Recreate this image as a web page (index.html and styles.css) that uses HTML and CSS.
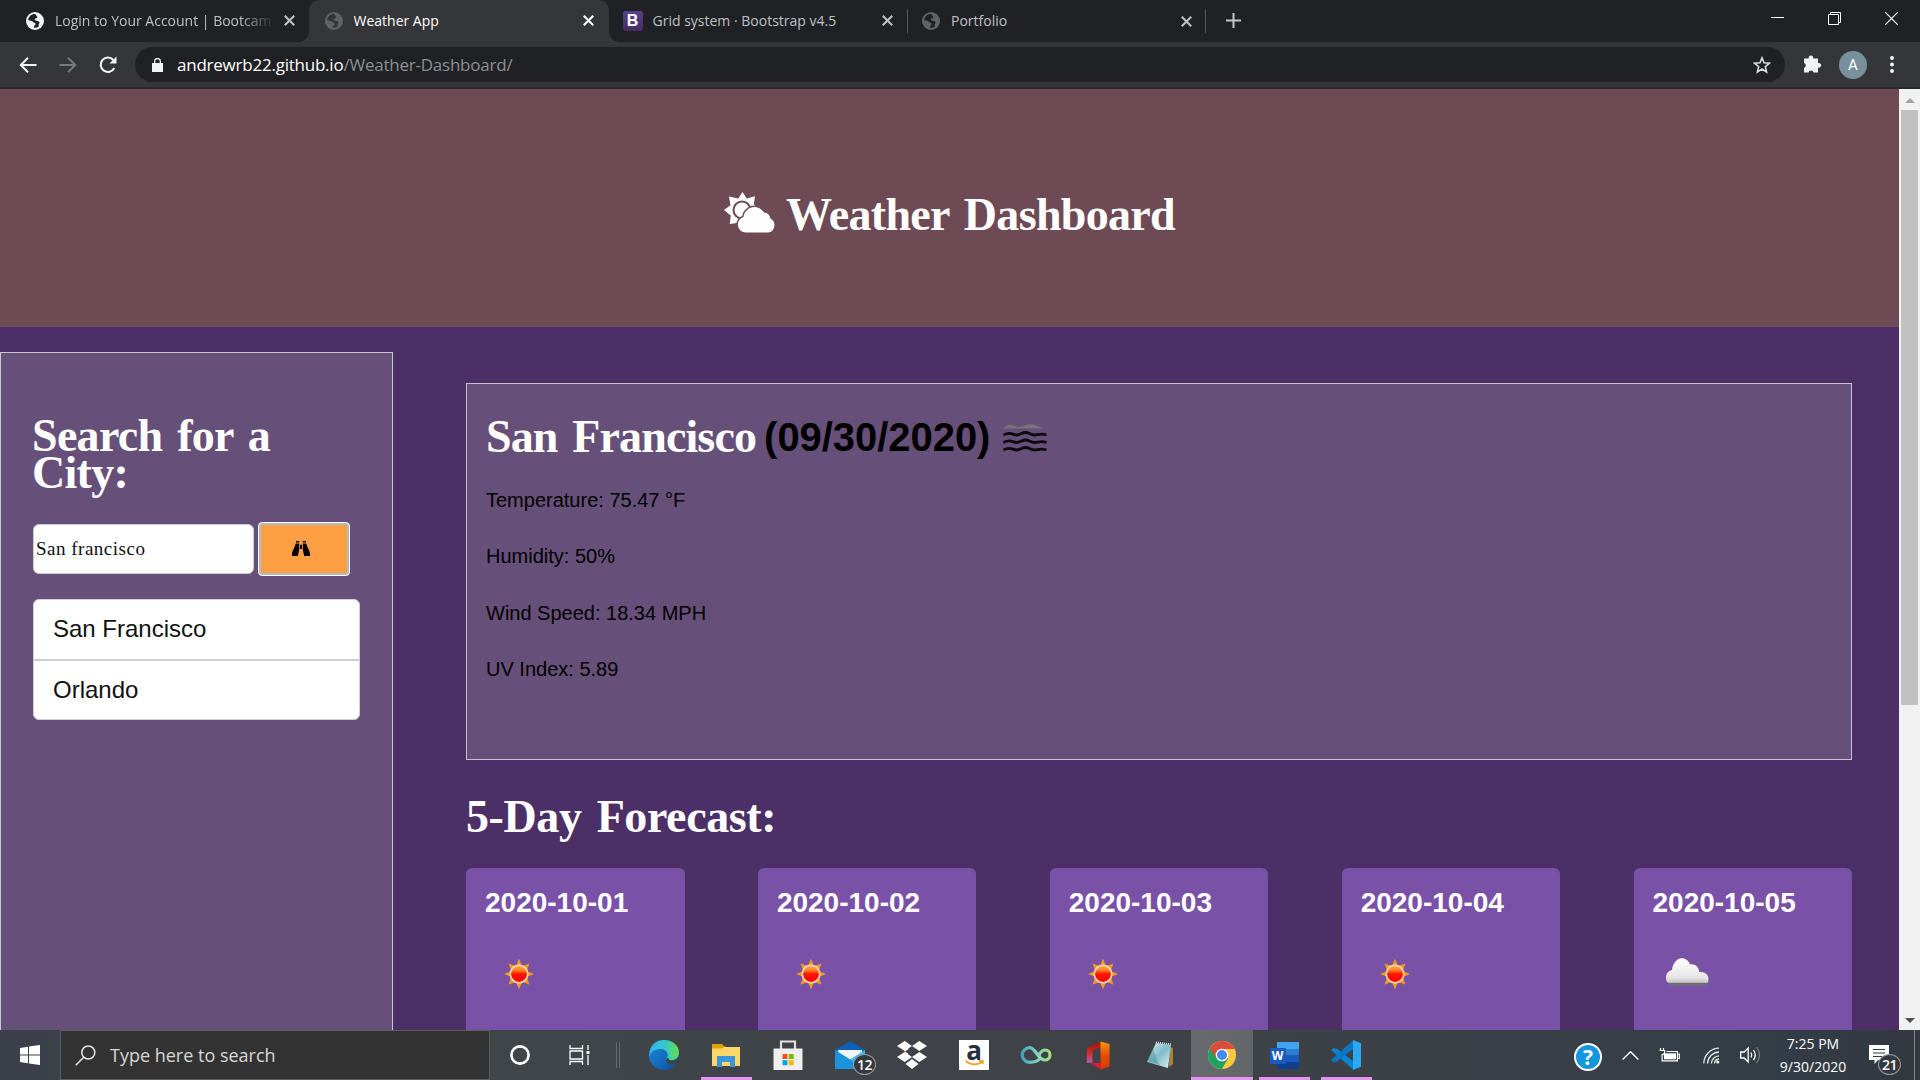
FILE: index.html
```
<!DOCTYPE html>
<html lang="en">
<head>
<meta charset="utf-8">
<title>Weather App</title>
<link rel="stylesheet" href="styles.css">
</head>
<body>
<svg class="defs" width="0" height="0" aria-hidden="true">
  <defs>
    <linearGradient id="sunFill" x1="0" y1="0" x2="0" y2="1"><stop offset="0" stop-color="#ffb35c"/><stop offset=".3" stop-color="#ff7a20"/><stop offset=".5" stop-color="#ff1500"/><stop offset="1" stop-color="#ff0000"/></linearGradient>
    <linearGradient id="cloudFill" x1="0" y1="0" x2="0" y2="1"><stop offset="0" stop-color="#ffffff"/><stop offset=".7" stop-color="#e6e6e6"/><stop offset=".88" stop-color="#c8c8c8"/><stop offset=".93" stop-color="#666"/><stop offset="1" stop-color="#777"/></linearGradient>
    <linearGradient id="edgeTop" x1="0" y1="0" x2="1" y2="0"><stop offset="0" stop-color="#2fb5f0"/><stop offset=".55" stop-color="#35c8c8"/><stop offset="1" stop-color="#6adf4a"/></linearGradient>
    <linearGradient id="edgeLow" x1="0" y1="0" x2="1" y2="1"><stop offset="0" stop-color="#1b8de0"/><stop offset="1" stop-color="#0b4f9e"/></linearGradient>
    <linearGradient id="infinity" x1="0" y1="0" x2="1" y2="0"><stop offset="0" stop-color="#43a3bd"/><stop offset=".5" stop-color="#7fd0c8"/><stop offset="1" stop-color="#a5e07f"/></linearGradient>
    <linearGradient id="office" x1="0" y1="0" x2="0" y2="1"><stop offset="0" stop-color="#9e1208"/><stop offset=".45" stop-color="#d0281a"/><stop offset="1" stop-color="#b55bb0"/></linearGradient>
    <linearGradient id="officeR" x1="0" y1="0" x2="0" y2="1"><stop offset="0" stop-color="#ff9a00"/><stop offset=".5" stop-color="#e64a00"/><stop offset="1" stop-color="#d83b01"/></linearGradient>
    <linearGradient id="pad" x1="0" y1="0" x2="1" y2="1"><stop offset="0" stop-color="#d9f1f5"/><stop offset=".5" stop-color="#7fbccb"/><stop offset="1" stop-color="#e2f2f5"/></linearGradient>
    <symbol id="globe" viewBox="0 0 18 18"><circle cx="9" cy="9" r="9"/><path class="land" d="M9.5 2.2C6 1.6 2.4 4.4 2.2 8.300c2 .4 3.600.2 4.700 1.500 1 1.300 2.600.7 2.700 2.300 0 1.300-1.900 1.500-1.800 3.500 1.500.4 3.500.1 5-1l-.2-2.400c1-.6 1.200-1.700.4-2.600-1-1.100-2.400-.6-3.500-1.200C8.200 7.800 8.700 6.600 10.200 6.300c1-.2 1.300-.9.900-1.800-.4-.7-1.200-1.200-1.600-2.300z"/></symbol>
    <symbol id="close" viewBox="0 0 10 10"><path d="M.7.7l8.600 8.600M9.300.7L.7 9.300" fill="none" stroke="currentColor" stroke-width="1.900"/></symbol>
    <symbol id="sun" viewBox="0 0 70 70">
      <path d="M35 19.500l3 7.500 7.500-2.500-2.800 7.500 7.300 3-7.300 3 2.800 7.500-7.500-2.500-3 7.500-3-7.500-7.500 2.500 2.800-7.500-7.300-3 7.300-3-2.800-7.500 7.500 2.500z" fill="#f59a1b"/>
      <circle cx="35" cy="35" r="8.700" fill="url(#sunFill)" stroke="#ffe0b8" stroke-width="1.500"/>
    </symbol>
  </defs>
</svg>

<div class="tabstrip">
  <div class="tab">
    <svg class="favicon globe bright"><use href="#globe"/></svg>
    <span class="tab-title faded">Login to Your Account | Bootcam</span>
    <svg class="tab-close"><use href="#close"/></svg>
  </div>
  <div class="tab active">
    <svg class="favicon globe dim on-active"><use href="#globe"/></svg>
    <span class="tab-title">Weather App</span>
    <svg class="tab-close"><use href="#close"/></svg>
  </div>
  <div class="tab">
    <span class="favicon bootstrap">B</span>
    <span class="tab-title">Grid system · Bootstrap v4.5</span>
    <svg class="tab-close"><use href="#close"/></svg>
  </div>
  <div class="tab divided">
    <svg class="favicon globe dim"><use href="#globe"/></svg>
    <span class="tab-title">Portfolio</span>
    <svg class="tab-close"><use href="#close"/></svg>
  </div>
  <div class="new-tab"><svg width="15" height="15" viewBox="0 0 15 15"><path d="M7.500 0v15M0 7.500h15" stroke="#c4c7ca" stroke-width="2"/></svg></div>
  <div class="window-controls">
    <svg width="13" height="13" viewBox="0 0 13 13"><path d="M0 5.500h13" stroke="#fff"/></svg>
    <svg width="13" height="13" viewBox="0 0 13 13" fill="none" stroke="#fff"><path d="M.5 2.500h10v10H.5zM2.500 2.500v-2h10v10h-2"/></svg>
    <svg width="13" height="13" viewBox="0 0 13 13" stroke="#fff" stroke-width="1.200"><path d="M.3.3l12.400 12.400M12.700.3L.3 12.700"/></svg>
  </div>
</div>

<div class="toolbar">
  <svg class="nav" width="18" height="16" viewBox="0 0 18 16" fill="none" stroke="#f1f3f4" stroke-width="2"><path d="M17.500 8H2M9 .8L1.800 8 9 15.200"/></svg>
  <svg class="nav" width="18" height="16" viewBox="0 0 18 16" fill="none" stroke="#77797d" stroke-width="2"><path d="M.5 8H16M9 .8L16.200 8 9 15.200"/></svg>
  <svg class="nav" width="18" height="18" viewBox="0 0 18 18" fill="none" stroke="#f1f3f4" stroke-width="2.100"><path d="M15.300 12A7.200 7.200 0 1 1 14.300 4"/><path d="M17.500.5v7h-7z" fill="#f1f3f4" stroke="none"/></svg>
  <div class="omnibox">
    <svg width="11" height="14" viewBox="0 0 11 14"><path d="M0 5h11v9H0z" fill="#f1f3f4"/><path d="M2.700 6V3.300a2.800 2.800 0 0 1 5.600 0V6" fill="none" stroke="#f1f3f4" stroke-width="1.300"/></svg>
    <span class="url"><b>andrewrb22.github.io</b>/Weather-Dashboard/</span>
    <svg class="star" width="18" height="18" viewBox="0 0 18 18" fill="none" stroke="#dadce0" stroke-width="1.600"><path d="M9 1.800l2 5 5.400.4-4.100 3.500 1.300 5.200L9 13l-4.600 2.900 1.300-5.200L1.600 7.200 7 6.800z"/></svg>
  </div>
  <svg class="puzzle" width="19" height="19" viewBox="0 0 19 19" fill="#f1f3f4"><path d="M1 4.500h4.800a2.300 2.300 0 1 1 4.300 0H15v4.600a2.400 2.400 0 1 1 0 4.500V18.500h-4.500a2.500 2.500 0 0 0-4.900 0H1v-4.600a2.500 2.500 0 0 0 0-4.800z"/></svg>
  <span class="avatar">A</span>
  <svg class="dots" width="4" height="17" viewBox="0 0 4 17" fill="#f1f3f4"><circle cx="2" cy="2" r="2"/><circle cx="2" cy="8.500" r="2"/><circle cx="2" cy="15" r="2"/></svg>
</div>

<div class="viewport">
  <div class="page">
    <header class="banner">
      <svg class="banner-icon" width="52" height="41" viewBox="0 0 52 41">
        <path d="M18.500 0l4.300 6.600 8.200-2.400-1.200 8 6.500 5.500-8 6-12 6.800-10.500 1.500 1-8.500L0 18l6.500-4.700L5 4.600l9.200 2z" fill="#fff"/>
        <circle cx="18" cy="18" r="8.500" fill="#fff" stroke="#6e4a55" stroke-width="2"/>
        <path d="M21 40.500a8 8 0 0 1-1.500-15.600A11 11 0 0 1 40 20.500a7.400 7.400 0 0 1 6.500 6A7.500 7.500 0 0 1 44 40.500z" fill="#fff" stroke="#6e4a55" stroke-width="3" paint-order="stroke"/>
      </svg>
      <h1>Weather Dashboard</h1>
    </header>
    <div class="columns">
      <aside class="sidebar">
        <h2>Search for a<br>City:</h2>
        <div class="search-row">
          <input class="search-input" type="text" value="San francisco">
          <button class="search-btn">
            <svg width="18" height="15" viewBox="0 0 18 15"><path d="M4 0h3.200v1.500H4zM10.800 0H14v1.500h-3.200zM3.700 2.500h3.500V9L5.800 15H0v-2.500C.3 9 3.300 6 3.700 2.500zM14.300 2.500h-3.500V9l1.400 6H18v-2.500c-.3-3.500-3.300-6.500-3.700-10zM8 3.700h2V8H8z"/></svg>
          </button>
        </div>
        <ul class="history"><li>San Francisco</li><li>Orlando</li></ul>
      </aside>
      <main class="main">
        <section class="current">
          <div class="current-title">
            <h2>San Francisco</h2>
            <h3>(09/30/2020)</h3>
            <svg class="mist" width="44" height="28" viewBox="0 0 44 28" fill="none" stroke-width="2.800" stroke="#0b090d"><path d="M0 4.500q5.500-5.500 11-3t11 0 11 0T44 4.500z" fill="#77737b" stroke="none"/><path d="M.5 11c7-4 9 0 13 0s5-2.500 9-2.500 5 2.500 9 2.500 6-2 12 0M.5 18.500c7-4 9 0 13 0s5-2.500 9-2.500 5 2.500 9 2.500 6-2 12 0M.5 26c7-4 9 0 13 0s5-2.500 9-2.500 5 2.500 9 2.500 6-2 12 0"/></svg>
          </div>
          <div class="stats"><p>Temperature: 75.47 °F</p><p>Humidity: 50%</p><p>Wind Speed: 18.34 MPH</p><p>UV Index: 5.89</p></div>
        </section>
        <h2 class="forecast-title">5-Day Forecast:</h2>
        <div class="forecast">
          <article class="day"><h4>2020-10-01</h4><svg class="sky"><use href="#sun"/></svg></article>
          <article class="day"><h4>2020-10-02</h4><svg class="sky"><use href="#sun"/></svg></article>
          <article class="day"><h4>2020-10-03</h4><svg class="sky"><use href="#sun"/></svg></article>
          <article class="day"><h4>2020-10-04</h4><svg class="sky"><use href="#sun"/></svg></article>
          <article class="day"><h4>2020-10-05</h4><svg class="sky" viewBox="-1 1 70 70"><path d="M20.500 47.500c-5-.3-8-4-7.500-8.500.3-4 3-6.500 6-7 .5-6 4.500-11.500 9.500-11.700 4-.1 7 2.200 8.500 6.200 5-1 8.700 2.300 9.300 7.500 5-.8 9.500 2.500 9.200 7.500-.1 3.500-2 5.800-5 6z" fill="url(#cloudFill)"/></svg></article>
        </div>
      </main>
    </div>
  </div>
  <div class="scrollbar">
    <svg width="10" height="5" viewBox="0 0 10 5"><path d="M0 5l5-5 5 5z" fill="#a3a3a3"/></svg>
    <span class="thumb"></span>
    <svg class="down" width="10" height="5" viewBox="0 0 10 5"><path d="M0 0l5 5 5-5z" fill="#505050"/></svg>
  </div>
</div>

<div class="taskbar">
  <div class="start"><svg width="20" height="20" viewBox="0 0 20 20" fill="#fff"><path d="M0 3l8-1.200v7.700H0zM9 1.600L20 0v9.500H9zM0 10.500h8v7.700L0 17zM9 10.500h11V20L9 18.400z"/></svg></div>
  <div class="search-box">
    <svg width="21" height="21" viewBox="0 0 21 21" fill="none" stroke="#e8e8e8" stroke-width="1.500"><circle cx="13.300" cy="7.500" r="6.500"/><path d="M8.700 12.200L.7 20.200"/></svg>
    <span>Type here to search</span>
  </div>
  <div class="cell first"><svg width="22" height="22" viewBox="0 0 22 22"><circle cx="11" cy="11" r="8.600" fill="none" stroke="#fff" stroke-width="2.600"/></svg></div>
  <div class="cell narrow"><svg width="22" height="20" viewBox="0 0 22 20" fill="none" stroke="#fff" stroke-width="1.300"><path d="M1 0v3.500h12.500V0M1 6h12.500v8H1zM1 20v-3.500h12.500V20M19 0v5M19 10v10"/><path d="M17.500 6h3v3h-3z" fill="#fff" stroke="none"/></svg></div>
  <div class="grip"></div>

  <div class="cell"><svg width="30" height="30" viewBox="0 0 30 30"><circle cx="15" cy="15" r="15" fill="url(#edgeLow)"/><path d="M.5 12C2 4 8 0 15 0c9 0 15 6 15 12.500 0 5-4 8-8.500 8-3 0-5-1.300-3.500-3 2-3 0-8.500-6-8.500C6 9 2 11 0 17z" fill="url(#edgeTop)"/><path d="M20 17.500c-1 1.300 0 3 3.500 3 3 0 5-1.500 6-3.500l.5 5-3 2-4 .8c-4-.3-7-3-5-6.300z" fill="#3f4347"/></svg></div>
  <div class="cell open"><svg width="30" height="24" viewBox="0 0 30 24"><path d="M1 1h10l2.500 2.500H15V8H1z" fill="#e0a000"/><path d="M1 5.500h10L13 4h16v19H1z" fill="#ffd667"/><path d="M6 13h18v11h-5v-5h-8v5H6z" fill="#3d95db"/></svg></div>
  <div class="cell"><svg width="30" height="30" viewBox="0 0 30 30"><path d="M8 9V1.500h14V9" fill="none" stroke="#e2e2e2" stroke-width="2.200"/><path d="M.5 8.500h29V30H.5z" fill="#efefef"/><path d="M9.500 14h5v5h-5z" fill="#f25022"/><path d="M15.700 14h5v5h-5z" fill="#7fba00"/><path d="M9.500 20.200h5v5h-5z" fill="#00a4ef"/><path d="M15.700 20.200h5v5h-5z" fill="#ffb900"/></svg></div>
  <div class="cell mail"><svg width="30" height="28" viewBox="0 0 30 28"><path d="M0 9L15 0l15 9v9H0z" fill="#0f5fb5"/><path d="M3 9h24v9H3z" fill="#f3f3f3"/><path d="M0 9l15 9.500L30 9v19H0z" fill="#35bdf2"/><path d="M0 9l30 19H0z" fill="#1c93df"/></svg><span class="badge">12</span></div>
  <div class="cell"><svg width="30" height="28" viewBox="0 0 30 28" fill="#fff"><path d="M7.700 0L15 5l-7.300 5L0 5zM22.300 0L30 5l-7.700 5L15 5zM7.700 11L15 16l-7.300 5L0 16zM22.300 11L30 16l-7.700 5-7.300-5zM7.700 5l7.300 5.300-7.300 5zM15 18l6.500 5-6.500 5-6.500-5z"/><path d="M15 5.800l7 4.700-7 4.700-7-4.700z" fill="#3f4347"/></svg></div>
  <div class="cell"><span class="amazon">a<svg width="19" height="6" viewBox="0 0 19 6" fill="none" stroke="#f79b1e" stroke-width="1.700"><path d="M.5.8q8 6.500 16.500 1.200M14 .9h3.700v3"/></svg></span></div>
  <div class="cell"><svg width="32" height="18" viewBox="0 0 32 18" fill="none" stroke="url(#infinity)" stroke-width="3.200"><path d="M20 12.500C17 16 14 16.300 9.500 16.300a7.300 7.300 0 1 1 0-14.600C16 1.700 17.500 14 25 14a4.900 4.900 0 1 0 0-10c-2.500 0-4 1.500-6 4.500z"/></svg></div>
  <div class="cell"><svg width="24" height="29" viewBox="0 0 24 29"><path d="M.8 7L14.500.5v6L6.500 9v12.500L.8 22z" fill="url(#office)"/><path d="M14.500.5L23.500 3v22.500l-9 3z" fill="url(#officeR)"/><path d="M4.500 22h10v6.500z" fill="#e2183a"/></svg></div>
  <div class="cell"><svg width="28" height="28" viewBox="0 0 28 28"><path d="M24 6l3 1v16l-4 3z" fill="#a98436"/><path d="M10 2l15 2-3 23-21-6z" fill="url(#pad)"/><path d="M1 20l6-13 4 12 3 5z" fill="#3f8296" opacity=".4"/><path d="M10 1.500l15 1.800" stroke="#dbe4e6" stroke-width="2" stroke-dasharray="1 1"/></svg></div>
  <div class="cell open current-app"><svg width="28" height="28" viewBox="0 0 28 28"><circle cx="14" cy="14" r="14" fill="#fdc93c"/><path d="M14 14L1.900 7A14 14 0 0 0 14 28l6-10.500z" fill="#1ea25f"/><path d="M1.900 7A14 14 0 0 1 26.100 7L27 8H14l-6 9z" fill="#dd4a3e"/><circle cx="14" cy="14" r="6.300" fill="#fff"/><circle cx="14" cy="14" r="5" fill="#4688f1"/></svg></div>
  <div class="cell open"><span class="word"><i>W</i></span></div>
  <div class="cell open"><svg width="30" height="30" viewBox="0 0 30 30"><path d="M0 10l2.500-2 4 1L22 21v8.500z" fill="#0a84d3"/><path d="M0 20l2.500 2.500 3.500-1L22 9V.5z" fill="#0877c4"/><path d="M22 0l8 3.300v23.400L22 30z" fill="#2aa9f2"/></svg></div>

  <div class="tray">
    <span class="help">?</span>
    <svg class="chev" width="17" height="9" viewBox="0 0 17 9" fill="none" stroke="#fff" stroke-width="1.400"><path d="M.6 8.400l7.900-7.700 7.900 7.700"/></svg>
    <svg class="batt" width="21" height="14" viewBox="0 0 21 14" fill="none" stroke="#fff" stroke-width="1.200"><path d="M1.500 0v2.500M4.500 0v2.500M.6 2.500h5v2q0 2-2.500 2.200v6.200h15.300V3.500H7.500M19 6h1.300v4.500H19"/><path d="M5 5.300h12v6H5z" fill="#fff" stroke="none"/></svg>
    <svg class="wifi" width="17" height="17" viewBox="0 0 17 17" fill="none" stroke="#e8e8e8" stroke-width="1.300"><path d="M.8 16.500A15.500 15.500 0 0 1 16 1.200M4.500 16.500A12 12 0 0 1 16 5M8.300 16.500A8 8 0 0 1 16 8.900M11.500 16.500A5 5 0 0 1 16 12"/><circle cx="14.800" cy="15" r="1.500" fill="#fff" stroke="none"/></svg>
    <svg class="vol" width="21" height="18" viewBox="0 0 21 18" fill="none" stroke="#fff" stroke-width="1.300"><path d="M.7 6h3.500l4-4v14l-4-4H.7z"/><path d="M11 6.500q1.500 2.500 0 5M13.500 4q3.500 5 0 10"/><path d="M16.500 1.200q6 7.800 0 15.600" stroke="#777b80"/></svg>
    <div class="clock"><span>7:25 PM</span><span class="date">9/30/2020</span></div>
    <div class="notes"><svg width="20" height="20" viewBox="0 0 20 20"><path d="M0 0h20v15H9l-3.500 4v-4H0z" fill="#fff"/><path d="M4 4.500h12M4 8h12M4 11.500h12" stroke="#33383e" stroke-width="1.200"/></svg><span class="badge">21</span></div>
    <div class="peek"></div>
  </div>
</div>
</body>
</html>
```
FILE: styles.css
```
* { box-sizing: border-box; }
html, body { margin: 0; height: 100%; }
body { display: flex; flex-direction: column; width: 1920px; height: 1080px; overflow: hidden; font-family: "Liberation Sans", Arial, sans-serif; background: #4c2f66; }
h1, h2, h3, h4, p, ul { margin: 0; padding: 0; }
svg { display: block; flex: none; }
.defs { position: absolute; }

/* browser tabs */
.tabstrip { display: flex; flex: none; height: 42px; padding-left: 10px; background: #202124; font: 14px/20px "Open Sans", sans-serif; color: #bdc1c6; }
.tab { display: flex; align-items: center; width: 298.500px; padding: 0 13px 1px 16px; flex: none; }
.tab.active { position: relative; width: 300px; padding-right: 14px; background: #35363a; border-radius: 10px 10px 0 0; color: #fff; }
.tab.active::before, .tab.active::after { content: ""; position: absolute; bottom: 0; width: 10px; height: 10px; }
.tab.active::before { left: -10px; background: radial-gradient(circle at 0 0, transparent 9.500px, #35363a 10px); }
.tab.active::after { right: -10px; background: radial-gradient(circle at 100% 0, transparent 9.500px, #35363a 10px); }
.tab.divided { border-left: 1px solid #55575b; border-right: 1px solid #55575b; background: #202124; height: 24px; margin-top: 9px; padding: 0 12px 0 14px; align-self: flex-start; }
.favicon { width: 18px; height: 18px; margin-right: 11px; flex: none; }
.globe.bright { fill: #f1f3f4; color: #202124; }
.globe.dim { fill: #5f6368; color: #202124; }
.globe.on-active { color: #35363a; }
.land { fill: currentColor; }
.favicon.bootstrap { width: 20px; height: 20px; margin: 0 10px 0 -2px; border-radius: 3px; background: linear-gradient(#59408a, #452c66); color: #fff; font: bold 16px/20px "Liberation Sans", sans-serif; text-align: center; }
.tab-title { flex: 1; white-space: nowrap; overflow: hidden; }
.faded { -webkit-mask-image: linear-gradient(90deg, #000 185px, transparent 220px); mask-image: linear-gradient(90deg, #000 185px, transparent 220px); }
.tab-close { width: 11px; height: 11px; margin-right: 1px; }
.new-tab { padding: 13px 0 0 20px; }
.window-controls { display: flex; gap: 44px; margin: 12px 22px 0 auto; }

/* address bar */
.toolbar { display: flex; align-items: center; flex: none; height: 47px; padding: 0 0 0 19px; background: #35363a; border-bottom: 2px solid #28292c; }
.nav { margin-right: 22px; }
.nav:nth-child(3) { margin-right: 18px; }
.omnibox { display: flex; align-items: center; width: 1650px; height: 35px; padding: 0 14px 0 17px; border-radius: 18px; background: #202124; }
.url { margin-left: 14px; flex: 1; font: 17px/24px "Open Sans", sans-serif; letter-spacing: -.230px; color: #8b8f94; }
.url b { font-weight: 400; color: #fff; }
.puzzle { margin-left: 18px; margin-top: -3px; }
.avatar { width: 28px; height: 28px; margin-left: 17px; border-radius: 50%; background: #78909c; color: #fff; font: 15px/28px Roboto, sans-serif; text-align: center; }
.dots { margin-left: 23px; }

/* page */
.viewport { display: flex; flex: none; height: 941px; overflow: hidden; }
.page { width: 1899px; background: #4c2f66; }
h1, h2 { font-family: "Liberation Serif", "Times New Roman", serif; font-weight: 700; font-size: 46px; color: #fff; word-spacing: 4px; white-space: nowrap; }
.banner { display: flex; justify-content: center; align-items: flex-start; height: 238px; padding-top: 104px; background: #6e4a55; }
.banner-icon { margin: -1px 10px 0 0; }
h1 { line-height: 44px; letter-spacing: -.680px; }
.columns { display: flex; }
.sidebar { flex: none; width: 393px; height: 720px; margin-top: 25px; padding: 64px 32px 0; border: 1px solid #c8c8d0; background: #665079; }
.sidebar h2 { margin-left: -1px; line-height: 37px; letter-spacing: -.700px; }
.search-row { display: flex; align-items: center; gap: 4px; margin-top: 31px; }
.search-input { width: 221px; height: 50px; padding: 0 2px; border: 1px solid #ccc; border-radius: 6px; background: #fff; color: #111; font: 19px "Liberation Serif", serif; letter-spacing: .5px; }
.search-btn { display: flex; align-items: center; justify-content: center; width: 92px; height: 54px; padding: 0 7px 1px 0; border: 1px solid #fff; border-radius: 4px; background: #ff9f43; box-shadow: inset 0 0 0 2px #b2bcc6; }
.history { width: 327px; margin-top: 23px; list-style: none; border-radius: 6px; background: #fff; overflow: hidden; color: #111; font-size: 24px; border: 1px solid #ced0d6; }
.history li { height: 59px; padding: 0 19px; line-height: 58px; }
.history li + li { height: 60px; border-top: 2px solid #cdcdd3; }
.main { width: 1386px; margin: 56px 0 0 73px; }
.current { height: 377px; padding: 29px 19px 0; border: 1px solid #c8c3d0; background: #665079; }
.current-title { display: flex; align-items: baseline; height: 48px; line-height: 48px; }
.current-title h2 { letter-spacing: -.860px; }
.current-title h3 { margin: 0 0 0 8px; padding-bottom: 1px; font-size: 40px; letter-spacing: -.050px; transform: translateY(-1px); }
.mist { margin: 0 0 2px 13px; }
.stats { display: grid; gap: 32.600px; margin-top: 26.600px; font-size: 20px; line-height: 24px; }
.forecast-title { margin-top: 36.500px; line-height: 40px; letter-spacing: -.400px; }
.forecast { display: flex; justify-content: space-between; margin-top: 31.500px; }
.day { width: 218.500px; height: 300px; padding: 18.300px 18px 0; border-radius: 6px; background: #7952a8; color: #fff; }
.day h4 { margin-left: 1px; font-size: 28px; line-height: 34px; }
.sky { width: 70px; height: 70px; margin-top: 19px; }
.scrollbar { display: flex; flex-direction: column; align-items: center; width: 21px; padding-top: 9px; background: #f1f1f1; }
.thumb { width: 17px; height: 595px; margin-top: 7px; background: #c1c1c1; }
.scrollbar .down { margin: auto 0 7px; }

/* taskbar */
.taskbar { display: flex; align-items: stretch; flex: none; height: 50px; background: linear-gradient(90deg, #3b404a 0, #40454a 500px, #3f4347 1000px, #3c4147 1400px, #333c46 1800px, #34383f); }
.start { display: flex; align-items: center; width: 60px; padding-left: 20px; }
.search-box { display: flex; align-items: center; gap: 14px; width: 430px; padding: 0 14px; border: 1px solid #5d5d5d; background: #333; color: #d8d8d8; font: 18px/24px "Open Sans", sans-serif; }
.cell { display: flex; align-items: center; justify-content: center; position: relative; width: 62px; flex: none; }
.cell.first { width: 60px; }
.cell.narrow { width: 58px; margin: 0 2px 0 1px; }
.grip { width: 4px; height: 26px; margin: 12px 13px 0 5px; border: solid #65696d; border-width: 0 1px; }
.open::after { content: ""; position: absolute; left: 6px; right: 5px; bottom: 0; height: 3px; background: #e592f0; }
.current-app { background: linear-gradient(90deg, #676b6e, #636669); }
.current-app::after { left: 0; right: 0; }
.mail .badge { left: 34px; top: 24px; }
.badge { position: absolute; width: 23px; height: 21px; border: 1px solid #999; border-radius: 50%; background: #35393e; color: #fff; font: 600 14px/19px "Open Sans", sans-serif; letter-spacing: -.5px; text-align: center; }
.amazon { display: flex; flex-direction: column; align-items: center; width: 30px; height: 30px; background: #fff; color: #232f3e; font: bold 26px/20px "Open Sans", sans-serif; }
.word { display: flex; align-items: center; width: 29px; height: 27px; background: linear-gradient(#41a5ee 25%, #2b7cd3 25% 50%, #185abd 50% 75%, #103f91 75%) 7px 0 no-repeat; }
.word i { width: 16px; height: 16px; margin-top: 1px; border-radius: 1px; background: #185abd; color: #fff; font: bold 12px/16px "Open Sans", sans-serif; text-align: center; }
.tray { display: flex; align-items: center; margin-left: auto; color: #fff; }
.help { width: 28px; height: 28px; margin: 3px 20px 0 0; border: 2px solid #fff; border-radius: 50%; background: #1296dc; font: bold 21px/24px "Open Sans", sans-serif; text-align: center; }
.chev { margin-right: 20px; }
.batt { margin-right: 23px; }
.wifi { margin-right: 20px; }
.clock { display: flex; flex-direction: column; align-items: center; width: 80px; margin: 0 16px 0 12px; font: 14px/23px "Open Sans", sans-serif; }
.notes { position: relative; width: 45px; height: 50px; padding-top: 15px; }
.notes .badge { left: 9px; top: 24px; }
.peek { width: 6px; height: 50px; border-left: 1px solid #83868a; }
```
